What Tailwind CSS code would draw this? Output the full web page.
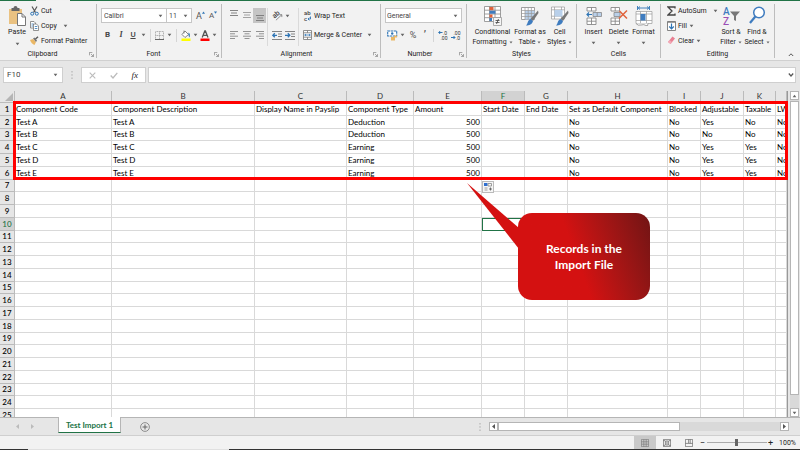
<!DOCTYPE html>
<html lang="en">
  <head>
    <meta charset="UTF-8" />
    <meta name="viewport" content="width=device-width, initial-scale=1.0" />
    <title>Test Import 1</title>
    <script src="https://cdn.jsdelivr.net/npm/@tailwindcss/browser@4"></script>
  </head>
  <body class="h-screen flex flex-col overflow-hidden bg-[#e6e6e6] font-['Roboto',sans-serif] text-[7px] leading-[10px] text-[#222]">
    <!-- shared icons -->
    <svg class="hidden">
      <symbol id="caret" viewBox="0 0 6 4"><path d="M0.8 0.5h4.4L3 3.4z" fill="#666" /></symbol>
      <symbol id="launcher" viewBox="0 0 6 6"><path d="M.5 4V.5H4M2.5 2.5L5 5M5.5 2.5v3h-3" fill="none" stroke="#777" stroke-width=".8" /></symbol>
      <symbol id="grid" viewBox="0 0 10 10"><path d="M.5.5h9v9h-9zM.5 3.5h9M.5 6.5h9M3.5.5v9M6.5.5v9" fill="none" stroke="#777" stroke-width=".8" /></symbol>
    </svg>

    <!-- title bar edge, with the active tab below it -->
    <div class="h-px flex shrink-0 bg-[#217346]">
      <div class="ml-9 w-[34px] bg-[#f1f1f1]"></div>
    </div>

    <!-- ribbon -->
    <header class="h-[60px] shrink-0 flex bg-[#f2f2f2] border-b border-[#d0d0d0] pt-[3px] pb-[2px] whitespace-nowrap">
      <section class="w-[97px] shrink-0 flex flex-col border-r border-[#bdbdbd]">
        <div class="flex-1 flex pl-2 gap-1">
          <button class="w-[18px] flex flex-col items-center pt-[2px]">
            <svg class="w-[18px] h-5" viewBox="0 0 18 20">
              <path d="M1 3h13v15H1z" fill="#eac282" />
              <path d="M3.500 2h2a2 2 0 0 1 4 0h2v3h-8z" fill="#666" />
              <path d="M9.500 7.500h4.500l3.500 3.500v8.500h-8z" fill="#fff" stroke="#777" />
              <path d="M14 7.500v3.500h3.500" fill="none" stroke="#777" />
            </svg>
            <span class="leading-3">Paste</span>
            <svg class="w-[5px] h-1 mt-1"><use href="#caret" /></svg>
          </button>
          <div class="flex flex-col gap-1">
            <button class="flex items-center gap-[2px] h-[11px] pt-[2px]">
              <svg class="w-[9px] h-[10px]" viewBox="0 0 9 10">
                <path d="M2 .5l3.500 6M7 .5L3.500 6.500" fill="none" stroke="#555" stroke-width="1.200" />
                <circle cx="2.200" cy="7.700" r="1.500" fill="none" stroke="#2f75b5" />
                <circle cx="6.800" cy="7.700" r="1.500" fill="none" stroke="#2f75b5" />
              </svg>
              Cut
            </button>
            <button class="flex items-center gap-[2px] h-[11px] pt-[2px]">
              <svg class="w-[9px] h-[10px]" viewBox="0 0 9 10">
                <path d="M.5.5h3.500l1.500 1.500v5h-5z" fill="#fff" stroke="#777" stroke-width=".8" />
                <path d="M3.500 3h3l2 2v4.500h-5z" fill="#fff" stroke="#777" stroke-width=".8" />
                <path d="M1.500 3h2M1.500 5h1.500M4.800 5.500h2.500M4.800 7.500h2.500" stroke="#2f75b5" stroke-width=".8" />
              </svg>
              Copy
              <svg class="w-[5px] h-1 ml-1"><use href="#caret" /></svg>
            </button>
            <button class="flex items-center gap-[2px] h-[11px] pt-[2px]">
              <svg class="w-[9px] h-[9px]" viewBox="0 0 9 9">
                <path d="M0 4l3-1 3 3-1.500 3C2.500 8.500 1 6.500 0 4z" fill="#eab765" />
                <path d="M3 2.500l1.500-1L7 4.500 6 6z" fill="#777" />
                <path d="M5.500 3l2.500-2.300" stroke="#555" stroke-width="1.400" />
              </svg>
              Format Painter
            </button>
          </div>
        </div>
        <footer class="flex items-center h-2">
          <span class="flex-1 text-center pr-1">Clipboard</span>
          <svg class="w-[5px] h-[5px] mr-[2px]"><use href="#launcher" /></svg>
        </footer>
      </section>

      <section class="w-[125px] shrink-0 flex flex-col border-r border-[#bdbdbd]">
        <div class="flex-1 flex flex-col gap-1 pt-1 pl-1">
          <div class="flex items-center">
            <div class="relative">
              <select aria-label="Font" class="appearance-none block w-[66px] h-[15px] bg-white border border-[#c6c6c6] pl-[2px] text-[#444]"><option>Calibri</option></select>
              <svg class="absolute right-1 top-[6px] w-[5px] h-1 pointer-events-none"><use href="#caret" /></svg>
            </div>
            <div class="relative">
              <select aria-label="Font size" class="appearance-none block w-[25px] h-[15px] bg-white border border-l-0 border-[#c6c6c6] pl-[2px] text-[#444]"><option>11</option></select>
              <svg class="absolute right-1 top-[6px] w-[5px] h-1 pointer-events-none"><use href="#caret" /></svg>
            </div>
            <button aria-label="Grow font" class="flex ml-1 text-[9px] text-[#555]">A<svg class="w-[3px] h-[3px]" viewBox="0 0 4 3"><path d="M2 0l2 3H0z" fill="#2f75b5" /></svg></button>
            <button aria-label="Shrink font" class="flex ml-1 text-[8px] text-[#555]">A<svg class="w-[3px] h-[3px]" viewBox="0 0 4 3"><path d="M2 3l2-3H0z" fill="#2f75b5" /></svg></button>
          </div>
          <div class="flex items-center h-4 pl-1 text-[#444]">
            <button class="w-[10px] text-left text-[8px] font-bold">B</button>
            <button class="w-3 text-center text-[8px] italic font-bold font-['Liberation_Serif',serif]">I</button>
            <button class="w-3 text-center text-[8px] font-medium underline">U</button>
            <svg class="w-[5px] h-1 ml-[2px]"><use href="#caret" /></svg>
            <span class="w-px h-[13px] ml-1 mr-1 bg-[#d5d5d5]"></span>
            <button aria-label="Borders"><svg class="w-[9px] h-[9px]" viewBox="0 0 9 9"><path d="M.5.5h8v8h-8zM4.500.5v8M.5 4.500h8" fill="none" stroke="#999" stroke-width=".8" stroke-dasharray="1 .6" /><path d="M0 8.500h9" stroke="#666" /></svg></button>
            <svg class="w-[5px] h-1 ml-[3px]"><use href="#caret" /></svg>
            <span class="w-px h-[13px] mx-1 bg-[#d5d5d5]"></span>
            <button aria-label="Fill colour"><svg class="w-[10px] h-[11px]" viewBox="0 0 10 11"><path d="M4 1l3.500 3.500L4 7.500 1 4.500z" fill="#fff" stroke="#777" stroke-width=".9" /><path d="M3 .5v3" stroke="#777" stroke-width=".8" /><path d="M7.500 2.500c1.500.5 1.500 2.500 1.200 5-1-1-1.500-2-1.200-5z" fill="#2f75b5" /><path d="M.5 8.500h9V11h-9z" fill="#ffff00" /></svg></button>
            <svg class="w-[5px] h-1 ml-[2px]"><use href="#caret" /></svg>
            <button aria-label="Font colour" class="ml-[2px]"><svg class="w-[10px] h-[11px]" viewBox="0 0 10 11"><path d="M2.200 7.500L4.800 1h.6L8 7.500M3.200 5.300H7" fill="none" stroke="#555" stroke-width="1.300" /><path d="M.5 8.500h9V11h-9z" fill="#f00" /></svg></button>
            <svg class="w-[5px] h-1 ml-[2px]"><use href="#caret" /></svg>
          </div>
        </div>
        <footer class="flex items-center h-2">
          <span class="flex-1 text-center pr-1">Font</span>
          <svg class="w-[5px] h-[5px] mr-[2px]"><use href="#launcher" /></svg>
        </footer>
      </section>

      <section class="w-[159px] shrink-0 flex flex-col border-r border-[#bdbdbd]">
        <div class="flex-1 flex pt-1 pl-[5px]">
          <div class="w-[41px] flex flex-col gap-[5px] border-r border-[#dadada] mb-1">
            <div class="flex items-center h-[15px]">
              <button aria-label="Top align" class="w-[13px] h-[15px] flex justify-center"><svg class="w-2 h-[14px]" viewBox="0 0 8 14"><path d="M0 2.500h8M1 5h6M0 7.500h8" stroke="#777" stroke-width=".9" /></svg></button>
              <button aria-label="Middle align" class="w-[13px] h-[15px] flex justify-center"><svg class="w-2 h-[14px]" viewBox="0 0 8 14"><path d="M0 4.500h8M1 7h6M0 9.500h8" stroke="#999" stroke-width=".9" /></svg></button>
              <button aria-label="Bottom align" class="w-[13px] h-[15px] flex justify-center bg-[#c5c5c5]"><svg class="w-2 h-[14px]" viewBox="0 0 8 14"><path d="M0 7.500h8M1 10h6M0 12.500h8" stroke="#777" stroke-width=".9" /></svg></button>
            </div>
            <div class="flex items-center h-[14px]">
              <button aria-label="Align left" class="w-[13px] flex justify-center"><svg class="w-2 h-2" viewBox="0 0 8 8"><path d="M0 .5h8M0 2.800h5M0 5.200h8M0 7.500h5" stroke="#888" stroke-width=".9" /></svg></button>
              <button aria-label="Centre" class="w-[13px] flex justify-center"><svg class="w-2 h-2" viewBox="0 0 8 8"><path d="M0 .5h8M1.500 2.800h5M0 5.200h8M1.500 7.500h5" stroke="#888" stroke-width=".9" /></svg></button>
              <button aria-label="Align right" class="w-[13px] flex justify-center"><svg class="w-2 h-2" viewBox="0 0 8 8"><path d="M0 .5h8M3 2.800h5M0 5.200h8M3 7.500h5" stroke="#888" stroke-width=".9" /></svg></button>
            </div>
          </div>
          <div class="w-[31px] flex flex-col gap-[5px] pl-1 border-r border-[#dadada] mb-1">
            <div class="flex items-center h-[15px] gap-[2px]">
              <button aria-label="Orientation"><svg class="w-[11px] h-[11px]" viewBox="0 0 14 14"><text x="2" y="10" font-size="9" font-weight="500" fill="#444" transform="rotate(-40 4 9)">ab</text><path d="M5 13L12.500 6M12.500 9V6H9.500" fill="none" stroke="#777" /></svg></button>
              <svg class="w-[5px] h-1"><use href="#caret" /></svg>
            </div>
            <div class="flex items-center h-[14px] gap-[3px]">
              <button aria-label="Decrease indent"><svg class="w-[10px] h-[9px]" viewBox="0 0 10 9"><path d="M0 .5h10M6 3h4M6 5.500h4M0 8.500h10" stroke="#777" stroke-width=".9" /><path d="M5 4.300H1M2.800 2.300l-2 2 2 2" fill="none" stroke="#2f75b5" stroke-width="1.300" /></svg></button>
              <button aria-label="Increase indent"><svg class="w-[10px] h-[9px]" viewBox="0 0 10 9"><path d="M0 .5h10M6 3h4M6 5.500h4M0 8.500h10" stroke="#777" stroke-width=".9" /><path d="M0 4.300h4.500M2.800 2.300l2 2-2 2" fill="none" stroke="#2f75b5" stroke-width="1.300" /></svg></button>
            </div>
          </div>
          <div class="flex flex-col gap-[5px] pl-1">
            <button class="flex items-center h-[15px] gap-[2px]">
              <svg class="w-[9px] h-[12px]" viewBox="0 0 9 12"><text x="1" y="5" font-size="6" font-weight="500" fill="#444">ab</text><text x="1" y="11" font-size="6" font-weight="500" fill="#444">c</text><path d="M7.500 6.500v2.500h-2.500M6.300 7.600L5 9l1.300 1.300" fill="none" stroke="#2f75b5" stroke-width=".9" /></svg>
              Wrap Text
            </button>
            <button class="flex items-center h-[14px] gap-[2px]">
              <svg class="w-[9px] h-[10px]" viewBox="0 0 9 10"><path d="M.5.5h8v9h-8zM.5 2.800h8M.5 7.200h8M4.500.5v2.300M4.500 7.200v2.300" fill="#fff" stroke="#777" stroke-width=".8" /><path d="M1.500 5h6M3 4L1.800 5 3 6M6 4l1.200 1L6 6" fill="none" stroke="#2f75b5" stroke-width=".8" /></svg>
              Merge &amp; Center
              <svg class="w-[5px] h-1 ml-[3px]"><use href="#caret" /></svg>
            </button>
          </div>
        </div>
        <footer class="flex items-center h-2">
          <span class="flex-1 text-center pr-[2px]">Alignment</span>
          <svg class="w-[5px] h-[5px] mr-[2px]"><use href="#launcher" /></svg>
        </footer>
      </section>

      <section class="w-[86px] shrink-0 flex flex-col border-r border-[#bdbdbd]">
        <div class="flex-1 flex flex-col gap-[5px] pt-1 px-1">
          <div class="relative">
            <select aria-label="Number format" class="appearance-none block w-full h-[15px] bg-white border border-[#c6c6c6] pl-px text-[#444]"><option>General</option></select>
            <svg class="absolute right-1 top-[6px] w-[5px] h-1 pointer-events-none"><use href="#caret" /></svg>
          </div>
          <div class="flex items-center h-[14px] pl-[2px]">
            <button aria-label="Currency"><svg class="w-[11px] h-[11px]" viewBox="0 0 11 11"><path d="M.7 1h9v5h-9z" fill="#fff" stroke="#2f75b5" stroke-width="1.100" stroke-dasharray="2.500 .6" /><circle cx="5.200" cy="3.500" r="1.200" fill="#2f75b5" /><path d="M4 7h4v3.500H4zM7 5.500h3v2H7z" fill="#eab765" /></svg></button>
            <svg class="w-[5px] h-1 ml-[2px]"><use href="#caret" /></svg>
            <button class="ml-1 w-2 text-[9px] text-[#555]">%</button>
            <button aria-label="Comma style" class="ml-1 w-2 text-center text-[10px] font-bold text-[#555]">’</button>
            <span class="w-px h-[13px] mx-1 bg-[#d5d5d5]"></span>
            <button aria-label="Increase decimal"><svg class="w-[10px] h-[10px]" viewBox="0 0 10 10"><text x="5" y="4.500" font-size="5" fill="#333">.0</text><text x="2.500" y="9.500" font-size="5" fill="#333">.00</text><path d="M4.500 2.500H.8M2.200 1L.7 2.500 2.200 4" fill="none" stroke="#2f75b5" /></svg></button>
            <button aria-label="Decrease decimal" class="ml-[3px]"><svg class="w-[10px] h-[10px]" viewBox="0 0 10 10"><text x="2.500" y="4.500" font-size="5" fill="#333">.00</text><text x="5" y="9.500" font-size="5" fill="#333">.0</text><path d="M0 7.500h4M2.500 6L4 7.500 2.500 9" fill="none" stroke="#2f75b5" /></svg></button>
          </div>
        </div>
        <footer class="flex items-center h-2">
          <span class="flex-1 text-center">Number</span>
          <svg class="w-[5px] h-[5px] mr-[2px]"><use href="#launcher" /></svg>
        </footer>
      </section>

      <section class="w-[110px] shrink-0 flex flex-col border-r border-[#bdbdbd]">
        <div class="flex-1 flex pt-[2px] pl-[5px]">
          <button class="w-[41px] flex flex-col items-center">
            <svg class="w-[18px] h-5" viewBox="0 0 18 20">
              <path d="M.5.5h16v15H.5zM.5 4.200h16M.5 8h16M.5 11.700h16M5.500.5v15M11 .5v15" fill="#fff" stroke="#888" stroke-width=".8" />
              <path d="M5.500 1h4v3.200h-4zM5.500 8.500h3v3h-3z" fill="#e0623c" /><path d="M5.500 4.700h6v3h-6zM5.500 12h2.500v3H5.500z" fill="#3f7cbf" />
              <path d="M9.500 11.500h8v8h-8z" fill="#f5f5f5" stroke="#999" stroke-width=".8" /><path d="M11.500 14.500h4M11.500 16.500h4M12.500 18l2-5" stroke="#444" stroke-width=".8" />
            </svg>
            <span class="leading-3">Conditional</span>
            <span class="flex items-center gap-[2px] leading-[9px]">Formatting<svg class="w-1 h-[3px]"><use href="#caret" /></svg></span>
          </button>
          <button class="w-[34px] flex flex-col items-center">
            <svg class="w-[18px] h-5" viewBox="0 0 18 20">
              <path d="M.5 1.500h13v12H.5z" fill="#fff" stroke="#888" stroke-width=".8" /><path d="M4 4.500h9.500v9H4z" fill="#b9d0ea" />
              <path d="M.5 4.500h13M.5 7.500h13M.5 10.500h13M4 1.500v12M7.200 1.500v12M10.400 1.500v12" stroke="#999" stroke-width=".7" />
              <path d="M17 4.500l.5 2.500-5.500 8-2.500-2z" fill="#777" /><path d="M9.500 13l2.500 2c-1 3.500-3.500 4.500-7 4.500 2-1.500 1.500-5.500 4.500-6.500z" fill="#3f7cbf" />
            </svg>
            <span class="leading-3">Format as</span>
            <span class="flex items-center gap-[2px] leading-[9px]">Table<svg class="w-1 h-[3px]"><use href="#caret" /></svg></span>
          </button>
          <button class="w-[25px] flex flex-col items-center">
            <svg class="w-[18px] h-5" viewBox="0 0 18 20">
              <path d="M.5 1h13v12H.5zM.5 3.800h13M.5 10.200h13M3.500 1v12M10.500 1v12" fill="#fff" stroke="#999" stroke-width=".7" /><path d="M3.500 4h8v6.500h-8z" fill="#b9d0ea" />
              <path d="M17 4.500l.5 2.500-5.500 8-2.500-2z" fill="#777" /><path d="M9.500 13l2.500 2c-1 3.500-3.500 4.500-7 4.500 2-1.500 1.500-5.500 4.500-6.500z" fill="#3f7cbf" />
            </svg>
            <span class="leading-3">Cell</span>
            <span class="flex items-center gap-[2px] leading-[9px]">Styles<svg class="w-1 h-[3px]"><use href="#caret" /></svg></span>
          </button>
        </div>
        <footer class="h-2 leading-2 text-center">Styles</footer>
      </section>

      <section class="w-[84px] shrink-0 flex flex-col border-r border-[#bdbdbd]">
        <div class="flex-1 flex pt-[2px] pl-1">
          <button class="w-[25px] flex flex-col items-center">
            <svg class="w-4 h-5" viewBox="0 0 16 20">
              <path d="M1 1.500h9v3.500H1zM5.500 1.500V5M1 12h9v6.500H1zM1 15.200h9M5.500 12v6.500" fill="#fff" stroke="#888" stroke-width=".9" />
              <path d="M7 6.500h8.500v4H7z" fill="#b9d0ea" stroke="#888" stroke-width=".8" /><path d="M11.200 6.500v4" stroke="#888" stroke-width=".8" />
              <path d="M6 8.500H1M3 6.500L1 8.500l2 2" fill="none" stroke="#2f75b5" stroke-width="1.200" />
            </svg>
            <span class="leading-3">Insert</span>
            <svg class="w-[5px] h-1 mt-[3px]"><use href="#caret" /></svg>
          </button>
          <button class="w-[25px] flex flex-col items-center">
            <svg class="w-[18px] h-5" viewBox="0 0 18 20">
              <path d="M1 1.500h8.500v3.500H1zM5.200 1.500V5M1 12h8.500v6.500H1zM1 15.200h8.500M5.200 12v6.500" fill="#fff" stroke="#888" stroke-width=".9" />
              <path d="M4 6.500h6v4H4z" fill="#b9d0ea" stroke="#888" stroke-width=".8" />
              <path d="M9.500 5l7.500 7.500M17 4.500l-8 8" stroke="#e0623c" stroke-width="1.500" />
            </svg>
            <span class="leading-3">Delete</span>
            <svg class="w-[5px] h-1 mt-[3px]"><use href="#caret" /></svg>
          </button>
          <button class="w-[25px] flex flex-col items-center">
            <svg class="w-[18px] h-5" viewBox="0 0 18 20">
              <path d="M2.500 0v4M14.500 0v4M3 2h11M5 .5L3.200 2 5 3.500M12 .5L13.800 2 12 3.500" fill="none" stroke="#2f75b5" stroke-width=".9" />
              <path d="M1 5.500h16v12H1zM1 8h16M1 14.500h16M5.500 5.500v12M11.500 5.500v12" fill="#fff" stroke="#999" stroke-width=".7" />
              <path d="M5.500 8h5v6.500h-5z" fill="#3f7cbf" /><path d="M1 17.500q2 2.500 5 1.500t5 .5 2-2" fill="#fff" stroke="#888" stroke-width=".8" />
            </svg>
            <span class="leading-3">Format</span>
            <svg class="w-[5px] h-1 mt-[3px]"><use href="#caret" /></svg>
          </button>
        </div>
        <footer class="h-2 leading-2 text-center">Cells</footer>
      </section>

      <section class="w-[114px] shrink-0 flex flex-col border-r border-[#bdbdbd]">
        <div class="flex-1 flex pl-[6px]">
          <div class="w-[51px] flex flex-col gap-1">
            <button class="flex items-center gap-[2px] h-[11px] pt-[2px]">
              <svg class="w-[9px] h-[10px]" viewBox="0 0 9 10"><path d="M8 2.500V1H1l4 4-4 4h7V7.500" fill="none" stroke="#444" stroke-width="1.300" /></svg>
              AutoSum
              <svg class="w-[5px] h-1 ml-1"><use href="#caret" /></svg>
            </button>
            <button class="flex items-center gap-[2px] h-[11px] pt-[2px]">
              <svg class="w-[9px] h-[10px]" viewBox="0 0 9 10"><path d="M.5.5h8v9h-8z" fill="#fff" stroke="#777" stroke-width=".9" /><path d="M.5 1.200h8" stroke="#777" /><path d="M4.500 2.500v5M2.200 5.500l2.300 2.300 2.300-2.300" fill="none" stroke="#2f75b5" stroke-width="1.200" /></svg>
              Fill
              <svg class="w-[5px] h-1"><use href="#caret" /></svg>
            </button>
            <button class="flex items-center gap-[2px] h-[11px] pt-[2px]">
              <svg class="w-[9px] h-[9px]" viewBox="0 0 9 9"><path d="M5.500.5l2.500 2L3.500 8 1 6z" fill="#e87f92" /><path d="M2.500 4l2.800 2.200L3.500 8 1 6z" fill="#f2a9b6" /></svg>
              Clear
              <svg class="w-[5px] h-1"><use href="#caret" /></svg>
            </button>
          </div>
          <button class="w-[26px] flex flex-col items-center pt-[2px]">
            <svg class="w-[18px] h-5" viewBox="0 0 18 20">
              <text x="1" y="8.500" font-size="10" fill="#3f7cbf" font-weight="500">A</text><text x="1" y="18.500" font-size="10" fill="#9a4fb5" font-weight="500">Z</text>
              <path d="M8 5.500h10l-4 4.500v5l-2 -1v-4z" fill="#777" />
            </svg>
            <span class="leading-3">Sort &amp;</span>
            <span class="flex items-center gap-[2px] leading-[9px]">Filter<svg class="w-1 h-[3px]"><use href="#caret" /></svg></span>
          </button>
          <button class="w-[26px] flex flex-col items-center pt-[2px]">
            <svg class="w-[18px] h-5" viewBox="0 0 18 20"><circle cx="11" cy="6.500" r="5.300" fill="#fff" stroke="#3f7cbf" stroke-width="1.500" /><path d="M7.300 10.500L2 17" stroke="#3f7cbf" stroke-width="2.200" /></svg>
            <span class="leading-3">Find &amp;</span>
            <span class="flex items-center gap-[2px] leading-[9px]">Select<svg class="w-1 h-[3px]"><use href="#caret" /></svg></span>
          </button>
        </div>
        <footer class="h-2 leading-2 text-center">Editing</footer>
      </section>

      <button aria-label="Collapse ribbon" class="ml-auto mr-[6px] self-end"><svg class="w-[6px] h-[6px]" viewBox="0 0 6 6"><path d="M.8 4L3 1.800 5.200 4" fill="none" stroke="#555" /></svg></button>
    </header>

    <!-- formula bar -->
    <div class="h-[30px] shrink-0 flex items-center pl-[3px] pr-1 pb-[2px]">
      <div class="w-[60px] h-4 flex items-center bg-white border border-[#cfcfcf] pl-[3px] pr-1">
        <input aria-label="Name box" value="F10" class="w-0 flex-1 text-[8px] text-[#444]" />
        <svg class="w-[5px] h-1"><use href="#caret" /></svg>
      </div>
      <svg class="w-[2px] h-2 mx-2" viewBox="0 0 2 8"><path d="M1 0v1.500M1 3.200v1.500M1 6.500V8" stroke="#aaa" /></svg>
      <div class="w-[65px] h-4 flex items-center justify-between bg-white border border-[#cfcfcf] px-[7px]">
        <button aria-label="Cancel"><svg class="w-[7px] h-[7px]" viewBox="0 0 7 7"><path d="M.7.7l5.600 5.600M6.300.7L.7 6.300" stroke="#bbb" stroke-width="1.100" /></svg></button>
        <button aria-label="Enter"><svg class="w-2 h-[7px]" viewBox="0 0 8 7"><path d="M.7 3.500l2.300 2.500L7.300.8" fill="none" stroke="#bbb" stroke-width="1.300" /></svg></button>
        <button aria-label="Insert function" class="font-['Liberation_Serif',serif] italic text-[9px]">fx</button>
      </div>
      <div class="flex-1 h-4 ml-[2px] flex items-center bg-white border border-[#cfcfcf] pr-px">
        <input aria-label="Formula" class="w-0 flex-1" />
        <svg class="w-[6px] h-[6px]" viewBox="0 0 6 6"><path d="M.8 1.500L3 4l2.200-2.500" fill="none" stroke="#555" stroke-width="1.200" /></svg>
      </div>
    </div>

    <!-- sheet -->
    <main class="relative flex-1 min-h-0 flex">
      <div class="flex-1 overflow-hidden bg-white border-r border-[#999]">
        <table class="table-fixed w-full border-separate border-spacing-0 font-['Lato',sans-serif] text-[8px] leading-[11px] text-black whitespace-nowrap">
          <colgroup>
            <col class="w-[15px]" />
            <col class="w-[97px]" />
            <col class="w-[143px]" />
            <col class="w-[92px]" />
            <col class="w-[67px]" />
            <col class="w-[68px]" />
            <col class="w-[43px]" />
            <col class="w-[43px]" />
            <col class="w-[100px]" />
            <col class="w-[33px]" />
            <col class="w-[43px]" />
            <col class="w-[32px]" />
            <col />
          </colgroup>
          <thead>
            <tr id="letters" class="h-3 bg-[#e6e6e6]"></tr>
          </thead>
          <tbody id="rows"></tbody>
        </table>
      </div>
      <div class="w-3 shrink-0 flex flex-col items-center pl-[2px] pr-[1px]">
        <button aria-label="Scroll up" class="w-[9px] h-[9px] flex items-center justify-center bg-white border border-[#b5b5b5]"><svg class="w-[5px] h-1 rotate-180"><use href="#caret" /></svg></button>
        <div class="w-[9px] flex-1 bg-[#d9d9d9] pt-px"><div class="h-[294px] bg-white border border-[#b5b5b5]"></div></div>
        <button aria-label="Scroll down" class="w-[9px] h-[9px] flex items-center justify-center bg-white border border-[#b5b5b5]"><svg class="w-[5px] h-1"><use href="#caret" /></svg></button>
      </div>

      <!-- highlighted records and their callout -->
      <div class="absolute left-[13px] right-3 top-[10px] h-[79px] border-3 border-[#f00]"></div>
      <div class="absolute left-[482px] top-[90px] size-3 bg-[#f6f6f6] border border-[#bbb]">
        <svg class="size-[10px]" viewBox="0 0 10 10"><path d="M1 1h3.500v3H1z" fill="#2f6fd0" /><path d="M5 1.500h3.500V4H5zM1.500 6h3M1.500 8h3" fill="none" stroke="#888" stroke-width=".8" /><path d="M7.500 5.500v3M6 7h3" stroke="#555" stroke-width=".8" /></svg>
      </div>
      <svg class="absolute left-[467px] top-[92px] w-[52px] h-[66px]" viewBox="0 0 52 66"><path d="M0 0l52 45v21z" fill="#d41111" /></svg>
      <div class="absolute left-[518px] top-[122px] w-[132px] h-[87px] rounded-[14px] bg-linear-70 from-[#d41111] from-45% to-[#711414] flex items-center justify-center text-center font-['Lato',sans-serif] text-[12px] leading-4 font-bold text-white">
        Records in the<br />Import File
      </div>
    </main>

    <!-- sheet tabs -->
    <nav class="h-[18px] shrink-0 flex border-t border-[#b5b5b5]">
      <div class="w-[58px] flex items-center gap-3 pl-4">
        <svg class="w-[3px] h-[5px]" viewBox="0 0 3 5"><path d="M3 0v5L0 2.500z" fill="#bbb" /></svg>
        <svg class="w-[3px] h-[5px]" viewBox="0 0 3 5"><path d="M0 0v5l3-2.500z" fill="#bbb" /></svg>
      </div>
      <a href="#" class="w-[63px] h-4 -mt-px flex items-center justify-center bg-white border-x border-x-[#b5b5b5] border-b border-b-[#217346] font-['Lato',sans-serif] text-[8px] font-bold text-[#217346]">Test Import 1</a>
      <button aria-label="New sheet" class="ml-[19px]"><svg class="w-[10px] h-[10px]" viewBox="0 0 10 10"><path d="M5 2.500v5M2.500 5h5" stroke="#666" /><circle cx="5" cy="5" r="4.400" fill="none" stroke="#777" stroke-width=".8" /></svg></button>
      <div class="ml-auto flex items-center pr-[11px]">
        <svg class="w-[2px] h-2 mr-2" viewBox="0 0 2 8"><path d="M1 0v1.500M1 3.200v1.500M1 6.500V8" stroke="#aaa" /></svg>
        <button aria-label="Scroll left" class="w-[9px] h-[9px] flex items-center justify-center bg-white border border-[#b5b5b5]"><svg class="w-[3px] h-[5px]" viewBox="0 0 3 5"><path d="M3 0v5L0 2.500z" fill="#555" /></svg></button>
        <div class="w-[282px] h-[9px] bg-[#d9d9d9]"><div class="w-[182px] h-[9px] bg-white border border-[#b5b5b5]"></div></div>
        <button aria-label="Scroll right" class="w-[9px] h-[9px] flex items-center justify-center bg-white border border-[#b5b5b5]"><svg class="w-[3px] h-[5px]" viewBox="0 0 3 5"><path d="M0 0v5l3-2.500z" fill="#555" /></svg></button>
      </div>
    </nav>

    <!-- status bar -->
    <footer class="h-[14px] shrink-0 flex items-center justify-end bg-[#f2f2f2] border-t border-[#cfcfcf] pr-1">
      <button aria-label="Normal view" class="w-[22px] h-full flex items-center justify-center bg-[#c9c9c9]"><svg class="w-2 h-2"><use href="#grid" /></svg></button>
      <button aria-label="Page layout" class="w-[22px] h-full flex items-center justify-center"><svg class="w-2 h-2" viewBox="0 0 10 10"><path d="M.5.5h9v9h-9zM3 2.500h4v5H3zM4 4h2M4 6h2M.5 2h2M7.500 2h2M.5 8h2M7.500 8h2" fill="none" stroke="#666" stroke-width=".9" /></svg></button>
      <button aria-label="Page break preview" class="w-[22px] h-full flex items-center justify-center"><svg class="w-2 h-2" viewBox="0 0 10 10"><path d="M.5.5h9v9h-9zM4.500.5v5h-4M9.500 5.500h-5M6.500.5v5" fill="none" stroke="#666" stroke-width=".9" /></svg></button>
      <span class="text-[9px]">−</span>
      <div class="w-[60px] h-px ml-[2px] bg-[#aaa] flex items-center justify-center"><span class="w-[3px] h-[7px] shrink-0 bg-[#666]"></span></div>
      <span class="ml-px text-[9px]">+</span>
      <span class="w-[17px] ml-[6px] text-right">100%</span>
    </footer>
    <div class="h-px shrink-0 flex bg-[#333]">
      <div class="ml-7 w-[201px] bg-[#e0e0e0]"></div>
    </div>

    <script>
      const letters = ["", "A", "B", "C", "D", "E", "F", "G", "H", "I", "J", "K", ""];
      const data = [
        ["Component Code", "Component Description", "Display Name in Payslip", "Component Type", "Amount", "Start Date", "End Date", "Set as Default Component", "Blocked", "Adjustable", "Taxable", "LWF"],
        ["Test A", "Test A", "", "Deduction", "500", "", "", "No", "No", "Yes", "No", "No"],
        ["Test B", "Test B", "", "Deduction", "500", "", "", "No", "No", "No", "No", "No"],
        ["Test C", "Test C", "", "Earning", "500", "", "", "No", "No", "Yes", "Yes", "No"],
        ["Test D", "Test D", "", "Earning", "500", "", "", "No", "No", "Yes", "Yes", "No"],
        ["Test E", "Test E", "", "Earning", "500", "", "", "No", "No", "Yes", "Yes", "No"],
      ];

      document.getElementById("letters").innerHTML = letters
        .map((l, i) => {
          if (i === 0)
            return `<td class="p-0 border-r border-b border-[#bbb]"><svg class="ml-auto mr-px w-2 h-2" viewBox="0 0 8 8"><path d="M8 0v8H0z" fill="#b5b5b5"/></svg></td>`;
          const look = l === "F" ? "bg-[#d2d2d2] text-[#217346]" : "text-[#333]";
          return `<th class="p-0 font-normal border-r border-b border-[#bbb] ${look}">${l}</th>`;
        })
        .join("");

      let html = "";
      for (let r = 1; r <= 25; r++) {
        const head = r === 10 ? "bg-[#d2d2d2] text-[#217346]" : "bg-[#e6e6e6] text-black";
        html += `<tr class="h-[13px] nth-[4n+3]:h-3"><th class="p-0 font-medium border-r border-b border-[#bbb] ${head}">${r}</th>`;
        for (let c = 0; c < 12; c++) {
          const text = (data[r - 1] || [])[c] || "";
          const align = c === 4 && r > 1 ? "text-right pr-px" : "text-left";
          const edge = r === 10 && c === 5 ? "border border-[#217346]" : "border-r border-b border-[#d9d9d9]";
          html += `<td class="p-0 pl-px overflow-hidden ${edge} ${align}">${text}</td>`;
        }
        html += "</tr>";
      }
      document.getElementById("rows").innerHTML = html;
    </script>
  </body>
</html>
